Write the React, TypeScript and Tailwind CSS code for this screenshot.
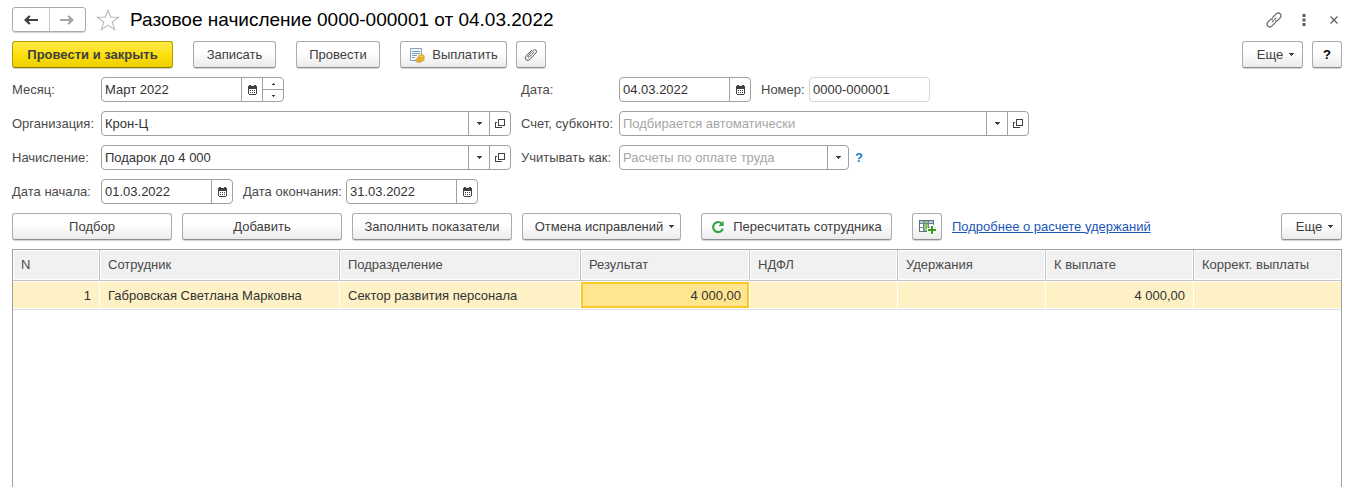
import React, { useState } from 'react';

const buttonBase =
  'flex h-[27px] shrink-0 items-center justify-center rounded-[3px] border text-[13px] leading-4 whitespace-nowrap';
const plainButton =
  'border-[#ababab] border-b-[#8f8f8f] bg-linear-to-b from-white from-40% to-[#ebebeb] text-[#404040] shadow-[0_1px_0_#d4d4d4]';

type ButtonProps = {
  width: string;
  children: React.ReactNode;
  label?: string;
};

function Button({ width, children, label }: ButtonProps) {
  return (
    <button type="button" aria-label={label} className={`${buttonBase} ${plainButton} ${width}`}>
      {children}
    </button>
  );
}

function Caret() {
  return (
    <svg width="5" height="3" viewBox="0 0 5 3" className="shrink-0" fill="#404040" shapeRendering="crispEdges">
      <path d="M0 0h5v1H0zM1 1h3v1H1zM2 2h1v1H2z" />
    </svg>
  );
}

function CalendarIcon() {
  return (
    <svg width="9" height="10" viewBox="0 0 9 10" fill="#404040" shapeRendering="crispEdges">
      <path d="M1 0h2v1h3V0h2v1h1v8H8V4H1v5H0V1h1zM1 9h7v1H1z" />
      <path d="M2 5h1v1H2zM4 5h1v1H4zM6 5h1v1H6zM2 7h1v1H2zM4 7h1v1H4zM6 7h1v1H6z" />
    </svg>
  );
}

function OpenIcon() {
  return (
    <svg width="10" height="10" viewBox="0 0 10 10" fill="none" stroke="#404040" shapeRendering="crispEdges">
      <path d="M3.5 .5h6v6h-6zM2 3.5H.5v5h6V8" />
    </svg>
  );
}

function ArrowIcon({ back, color }: { back?: boolean; color: string }) {
  return (
    <svg width="14" height="10" viewBox="0 0 14 10" fill={color}>
      {back ? (
        <path d="M0 5 5 .2 6.6 1.2 4.6 3.9H14V6.1H4.6L6.6 8.8 5 9.8Z" />
      ) : (
        <path d="M14 5 9 .2 7.4 1.2 9.4 3.9H0V6.1H9.4L7.4 8.8 9 9.8Z" />
      )}
    </svg>
  );
}

function StarIcon() {
  return (
    <svg width="24" height="22" viewBox="0 0 24 22" fill="none" stroke="#b4bac2" strokeWidth="1.1">
      <path d="M12 1.3 14.7 8.3H22.6L16.3 13 18.6 20.6 12 16.1 5.4 20.6 7.7 13 1.4 8.3H9.3Z" />
    </svg>
  );
}

function LinkIcon() {
  return (
    <svg width="16" height="16" viewBox="0 0 16 16" fill="none" stroke="#606060" strokeWidth="1.2" strokeLinecap="round">
      <path d="M6.7 5.3 10.2 1.8A2.8 2.8 0 0 1 14.2 5.8L11.6 8.4Q10.6 9.4 9.5 8.9" />
      <path d="M9.3 10.7 5.8 14.2A2.8 2.8 0 0 1 1.8 10.2L4.4 7.6Q5.4 6.6 6.5 7.1" />
      <path d="M6.2 9.8 7.4 8.6M8.6 7.4 9.8 6.2" />
    </svg>
  );
}

function ClipIcon() {
  return (
    <svg width="14" height="14" viewBox="0 0 14 14" fill="none" stroke="#5c5c5c" strokeWidth="1" strokeLinecap="round">
      <path d="M10 4.2 5.5 8.9Q4.7 9.7 4.1 9.1Q3.5 8.5 4.3 7.6L9.2 2.4Q10.8 1 12.1 2.2Q13.3 3.5 11.9 5.1L6 11.3Q3.9 13.3 2 11.8Q.3 10 2.2 7.9L7.6 2.2" />
    </svg>
  );
}

function PayIcon() {
  return (
    <svg width="16" height="16" viewBox="0 0 16 16">
      <path d="M1.5 1.5h11v12h-11z" fill="#f4f8fb" stroke="#8ba3b6" />
      <path d="M3 4.5h8M3 6.5h8M3 8.5h5M3 10.5h3" stroke="#7c9cb6" />
      <g fill="#fcd24a" stroke="#c28a1e" strokeWidth=".7">
        <ellipse cx="9.8" cy="14" rx="3" ry="1.4" />
        <ellipse cx="9.8" cy="12.4" rx="3" ry="1.4" />
        <ellipse cx="12.4" cy="12.6" rx="3" ry="1.4" />
        <ellipse cx="12.4" cy="10.9" rx="3" ry="1.4" />
        <ellipse cx="12.4" cy="9.2" rx="3" ry="1.4" />
      </g>
    </svg>
  );
}

function RefreshIcon() {
  return (
    <svg width="14" height="14" viewBox="0 0 14 14">
      <path d="M10.6 3.4A5 5 0 1 0 11.9 8.6" fill="none" stroke="#35a548" strokeWidth="2.2" />
      <path d="M12.6 .8V6H7.4Z" fill="#35a548" />
    </svg>
  );
}

function AddColumnIcon() {
  return (
    <svg width="17" height="16" viewBox="0 0 17 16" shapeRendering="crispEdges">
      <path d="M.5 1.5h14v11H.5z" fill="#fff" stroke="#5b7083" />
      <path d="M1 2h13v2H1z" fill="#b9c8d4" />
      <path d="M5 2h4v10H5z" fill="#8cc474" />
      <path d="M1 4.5h13M4.5 2v10M9.5 2v10M1 8.5h3M10 8.5h4" fill="none" stroke="#6d8293" />
      <path d="M11 6h4v3h2v4h-2v3h-4v-3H8V9h3z" fill="#fff" />
      <path d="M12 7h2v3h3v2h-3v3h-2v-3H9v-2h3z" fill="#3b9c16" />
    </svg>
  );
}

type FieldProps = {
  id: string;
  label: string;
  labelWidth: string;
  width: string;
  value?: string;
  placeholder?: string;
  readOnly?: boolean;
  controls?: Array<'calendar' | 'list' | 'open' | 'spin'>;
};

const controlNames = { calendar: 'Календарь', list: 'Список', open: 'Открыть' };

function Field({ id, label, labelWidth, width, value = '', placeholder, readOnly, controls = [] }: FieldProps) {
  const [text, setText] = useState(value);
  return (
    <div className="flex min-w-0 items-center">
      <label htmlFor={id} className={`shrink-0 whitespace-nowrap text-[#4a4a4a] ${labelWidth}`}>
        {label}
      </label>
      <div
        className={`flex h-[25px] min-w-0 overflow-hidden rounded-[4px] border bg-white ${width} ${
          readOnly ? 'border-[#d6d6d6]' : 'border-[#a0a0a0]'
        }`}
      >
        <input
          id={id}
          value={text}
          placeholder={placeholder}
          readOnly={readOnly}
          onChange={(e) => setText(e.target.value)}
          className="min-w-0 flex-1 px-[3px] text-[#333] outline-none placeholder:text-[#a6a6a6]"
        />
        {controls.map((control) =>
          control === 'spin' ? (
            <div key={control} className="flex w-[21px] shrink-0 flex-col border-l border-[#a0a0a0]">
              <button type="button" aria-label="Больше" className="flex flex-1 items-center justify-center border-b border-[#a0a0a0]">
                <svg width="3" height="2" viewBox="0 0 3 2" fill="#404040" shapeRendering="crispEdges">
                  <path d="M1 0h1v1h1v1H0V1h1z" />
                </svg>
              </button>
              <button type="button" aria-label="Меньше" className="flex flex-1 items-center justify-center">
                <svg width="3" height="2" viewBox="0 0 3 2" fill="#404040" shapeRendering="crispEdges">
                  <path d="M0 0h3v1H2v1H1V1H0z" />
                </svg>
              </button>
            </div>
          ) : (
            <button
              key={control}
              type="button"
              aria-label={controlNames[control]}
              className="flex w-[21px] shrink-0 items-center justify-center border-l border-[#a0a0a0]"
            >
              {control === 'calendar' && <CalendarIcon />}
              {control === 'list' && <Caret />}
              {control === 'open' && <OpenIcon />}
            </button>
          ),
        )}
      </div>
    </div>
  );
}

const columns = [
  { title: 'N', width: 'w-[87px]' },
  { title: 'Сотрудник', width: 'w-[240px]' },
  { title: 'Подразделение', width: 'w-[241px]' },
  { title: 'Результат', width: 'w-[169px]' },
  { title: 'НДФЛ', width: 'w-[148px]' },
  { title: 'Удержания', width: 'w-[148px]' },
  { title: 'К выплате', width: 'w-[148px]' },
  { title: 'Коррект. выплаты', width: '' },
];

const row = [
  { text: '1', right: true },
  { text: 'Габровская Светлана Марковна' },
  { text: 'Сектор развития персонала' },
  { text: '4 000,00', right: true, selected: true },
  { text: '' },
  { text: '' },
  { text: '4 000,00', right: true },
  { text: '' },
];

export default function App() {
  return (
    <main className="flex min-h-screen flex-col bg-white pt-[7px] pr-[10px] pl-3 font-['Liberation_Sans',Arial,sans-serif] text-[13px] leading-4">
      <header className="flex h-[25px] items-center">
        <div className="flex h-[25px] w-[74px] shrink-0 rounded-[3px] border border-[#ababab] shadow-[0_1px_0_#d4d4d4]">
          <button type="button" aria-label="Назад" className="flex flex-1 items-center justify-center border-r border-[#c8c8c8]">
            <ArrowIcon back color="#404040" />
          </button>
          <button type="button" aria-label="Вперед" className="flex flex-1 items-center justify-center">
            <ArrowIcon color="#a6a6a6" />
          </button>
        </div>
        <button type="button" aria-label="В избранное" className="ml-[10px] shrink-0">
          <StarIcon />
        </button>
        <h1 className="ml-[10px] text-[19px] leading-6 whitespace-nowrap text-black">
          Разовое начисление 0000-000001 от 04.03.2022
        </h1>
        <div className="ml-auto flex items-center pr-1">
          <button type="button" aria-label="Ссылка">
            <LinkIcon />
          </button>
          <button type="button" aria-label="Меню" className="ml-5">
            <svg width="4" height="12" viewBox="0 0 4 12" fill="#5c5c5c">
              <path d="M.5 0h3v3h-3zM.5 4.5h3v3h-3zM.5 9h3v3h-3z" />
            </svg>
          </button>
          <button type="button" aria-label="Закрыть" className="ml-6">
            <svg width="8" height="8" viewBox="0 0 8 8" stroke="#5c5c5c" strokeWidth="1.2">
              <path d="m.5.5 7 7M7.5.5l-7 7" />
            </svg>
          </button>
        </div>
      </header>

      <div className="mt-[9px] flex items-center">
        <button
          type="button"
          className={`${buttonBase} w-[161px] border-[#b39b00] border-b-[#8f7c00] bg-linear-to-b from-[#ffe943] via-[#fde00a] to-[#edcf00] font-bold text-[#404040] shadow-[0_1px_0_#d4d4d4]`}
        >
          Провести и закрыть
        </button>
        <div className="ml-5 flex gap-5">
          <Button width="w-[83px]">Записать</Button>
          <Button width="w-[84px]">Провести</Button>
          <Button width="w-[107px]">
            <PayIcon />
            <span className="ml-[7px]">Выплатить</span>
          </Button>
        </div>
        <div className="ml-[9px]">
          <Button width="w-[30px]" label="Файлы">
            <ClipIcon />
          </Button>
        </div>
        <div className="ml-auto flex gap-[9px] pl-5">
          <Button width="w-[61px]">
            <span className="mr-[6px] ml-[6px]">Еще</span>
            <Caret />
          </Button>
          <Button width="w-[30px]" label="Справка">
            <span className="font-bold text-black">?</span>
          </Button>
        </div>
      </div>

      <form className="mt-[9px] flex items-start gap-[10px]">
        <div className="flex flex-col gap-[9px]">
          <Field id="month" label="Месяц:" labelWidth="w-[89px]" width="w-[183px]" value="Март 2022" controls={['calendar', 'spin']} />
          <Field id="org" label="Организация:" labelWidth="w-[89px]" width="w-[410px]" value="Крон-Ц" controls={['list', 'open']} />
          <Field id="accrual" label="Начисление:" labelWidth="w-[89px]" width="w-[410px]" value="Подарок до 4 000" controls={['list', 'open']} />
          <div className="flex gap-[10px]">
            <Field id="start" label="Дата начала:" labelWidth="w-[89px]" width="w-[132px]" value="01.03.2022" controls={['calendar']} />
            <Field id="end" label="Дата окончания:" labelWidth="w-[103px]" width="w-[132px]" value="31.03.2022" controls={['calendar']} />
          </div>
        </div>
        <div className="flex flex-col gap-[9px]">
          <div className="flex gap-[10px]">
            <Field id="date" label="Дата:" labelWidth="w-[98px]" width="w-[132px]" value="04.03.2022" controls={['calendar']} />
            <Field id="number" label="Номер:" labelWidth="w-[48px]" width="w-[121px]" value="0000-000001" readOnly />
          </div>
          <Field id="account" label="Счет, субконто:" labelWidth="w-[98px]" width="w-[410px]" placeholder="Подбирается автоматически" controls={['list', 'open']} />
          <div className="flex items-center gap-[6px]">
            <Field id="kind" label="Учитывать как:" labelWidth="w-[98px]" width="w-[230px]" placeholder="Расчеты по оплате труда" controls={['list']} />
            <button type="button" className="font-bold text-[#1a7dc4]">?</button>
          </div>
        </div>
      </form>

      <div className="mt-[9px] flex items-center gap-[10px]">
        <Button width="w-[160px]">Подбор</Button>
        <Button width="w-[160px]">Добавить</Button>
        <Button width="w-[160px]">Заполнить показатели</Button>
        <Button width="w-[159px]">
          <span className="mr-[6px] ml-[6px]">Отмена исправлений</span>
          <Caret />
        </Button>
        <div className="ml-[10px] flex gap-5">
          <Button width="w-[191px]">
            <RefreshIcon />
            <span className="ml-2">Пересчитать сотрудника</span>
          </Button>
          <Button width="w-[30px]" label="Добавить колонку">
            <AddColumnIcon />
          </Button>
        </div>
        <a href="#details" className="whitespace-nowrap text-[#1a56b8] underline">
          Подробнее о расчете удержаний
        </a>
        <div className="ml-auto">
          <Button width="w-[61px]">
            <span className="mr-[6px] ml-[6px]">Еще</span>
            <Caret />
          </Button>
        </div>
      </div>

      <section className="mt-[9px] flex-1 border border-b-0 border-[#a0a0a0]">
        <table className="w-full table-fixed border-separate border-spacing-0">
          <thead>
            <tr className="h-[31px]">
              {columns.map((column) => (
                <th
                  key={column.title}
                  scope="col"
                  className={`border-r border-b border-[#c4c4c4] bg-[#f1f1f1] px-2 text-left font-normal whitespace-nowrap text-[#4a4a4a] shadow-[inset_0_0_0_1px_#fff] last:border-r-0 ${column.width}`}
                >
                  {column.title}
                </th>
              ))}
            </tr>
          </thead>
          <tbody>
            <tr className="h-[29px]">
              {row.map((cell, index) => (
                <td
                  key={columns[index].title}
                  className="border-r border-b border-r-white border-b-[#e2e2e2] bg-[#fdf1c5] p-0 text-[#333] shadow-[inset_0_1px_0_#fff,inset_0_-1px_0_#fff] last:border-r-0"
                >
                  <div
                    className={`flex h-[26px] items-center pt-[2px] whitespace-nowrap ${cell.right ? 'justify-end' : ''} ${
                      cell.selected ? 'border-2 border-[#fcc822] bg-[#ffe58f] px-[6px]' : 'px-2'
                    }`}
                  >
                    {cell.text}
                  </div>
                </td>
              ))}
            </tr>
          </tbody>
        </table>
      </section>
    </main>
  );
}
